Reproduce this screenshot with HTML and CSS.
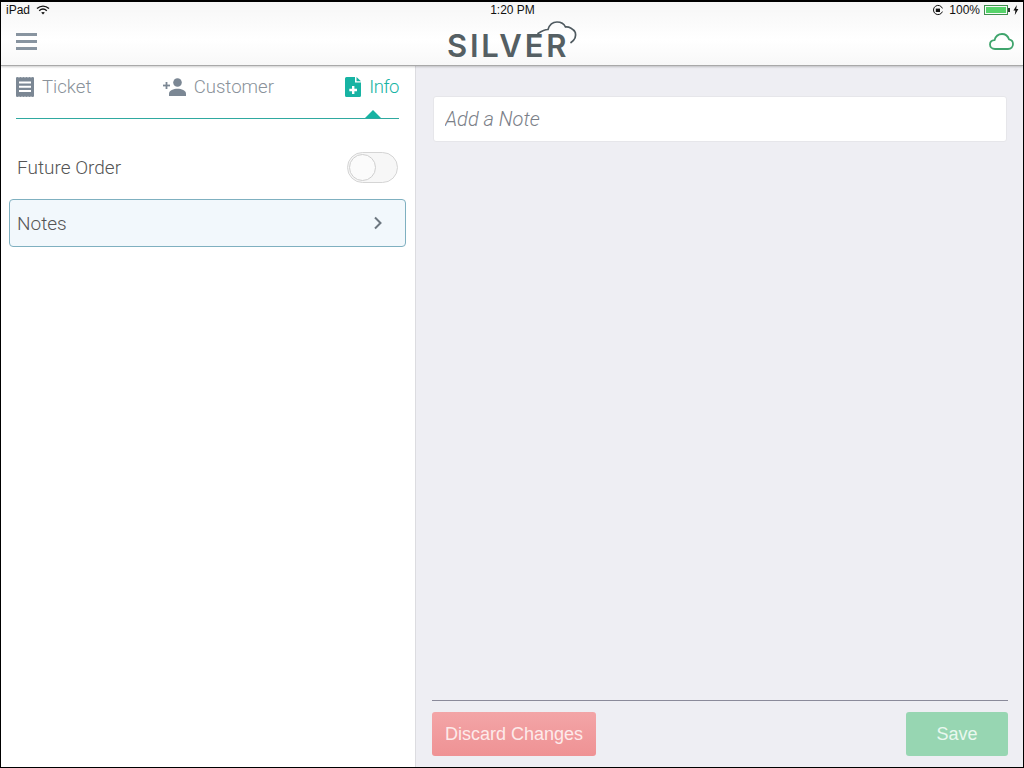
FILE: index.html
```html
<!DOCTYPE html>
<html lang="en">
<head>
    <meta charset="UTF-8">
    <title>Silver</title>
    <link rel="stylesheet" href="styles.css">
</head>
<body>
    <div class="frame">
        <header class="top">
            <div class="status-bar">
                <div class="status-left">
                    <span>iPad</span>
                    <svg class="wifi" width="14" height="10" viewBox="0 0 14 10">
                        <path d="M1 3.6C4.6.4 9.4.4 13 3.6" fill="none" stroke="#111" stroke-width="1.4"/>
                        <path d="M3.2 5.7c2.3-2 5.3-2 7.6 0" fill="none" stroke="#111" stroke-width="1.4"/>
                        <path d="M5.2 7.6c1-.9 2.6-.9 3.6 0L7 9.6z" fill="#111"/>
                    </svg>
                </div>
                <div class="status-time">1:20 PM</div>
                <div class="status-right">
                    <svg width="12" height="12" viewBox="0 0 12 12">
                        <path d="M10.4 7.6A4.6 4.6 0 1 1 10.4 4.4" fill="none" stroke="#111" stroke-width="1"/>
                        <rect x="3.8" y="4.6" width="4.2" height="3.4" fill="#111"/>
                    </svg>
                    <span class="battery-text">100%</span>
                    <div class="battery"><div class="battery-fill"></div></div>
                    <div class="battery-cap"></div>
                    <svg width="6" height="10" viewBox="0 0 6 10">
                        <path d="M3.8 0L.4 5.6h2L1.8 10l3.6-6H3.3z" fill="#111"/>
                    </svg>
                </div>
            </div>
            <div class="nav-bar">
                <button class="menu-button" aria-label="Menu">
                    <span></span><span></span><span></span>
                </button>
                <div class="logo">
                    <span class="logo-text">SILVER</span>
                    <svg class="logo-cloud" width="42" height="26" viewBox="0 0 42 26">
                        <path d="M2 13.500C5 11.500 9 9.500 12 9.500 13.500 4.500 17 2 21 2c4 0 7 1.800 8.500 5 3.500-.3 8 1.500 9.800 5.500 1 3.500-.8 7.500-4.300 10" fill="none" stroke="#4f5a60" stroke-width="1.700" stroke-linecap="round"/>
                    </svg>
                </div>
                <svg class="cloud-status" width="25" height="17" viewBox="0 0 25 17">
                    <path d="M6 16C3 16 1 14 1 11.500 1 9 3 7.300 5.500 7.200 6.500 3.500 9.500 1 13 1c3.500 0 6 2.300 7 5.300 2.300.4 4 2.400 4 4.700 0 2.800-2 5-5 5z" fill="none" stroke="#3fa46c" stroke-width="1.800"/>
                </svg>
            </div>
        </header>

        <div class="content">
            <aside class="sidebar">
                <nav class="tabs">
                    <div class="tab">
                        <svg width="18" height="20" viewBox="0 0 18 20">
                            <path d="M0 .5l1.500-.5 1.500.5 1.500-.5 1.500.5 1.500-.5 1.500.5 1.500-.5 1.500.5 1.500-.5 1.500.5 1.500-.5 1.500.5v19l-1.500.5-1.500-.5-1.500.5-1.500-.5-1.500.5-1.500-.5-1.500.5-1.500-.5-1.500.5-1.500-.5-1.500.5-1.500-.5z" fill="#7b8794"/>
                            <path d="M3 4.500h12v2H3zM3 8.700h12v2H3zM3 12.900h12v2H3z" fill="#fff"/>
                        </svg>
                        <span>Ticket</span>
                    </div>
                    <div class="tab tab-customer">
                        <svg width="24" height="18" viewBox="0 0 24 18">
                            <circle cx="14.500" cy="4.500" r="4.300" fill="#7b8794"/>
                            <path d="M6 18v-2.500c0-3 4.500-4.700 8.500-4.700s8.500 1.700 8.500 4.700V18z" fill="#7b8794"/>
                            <path d="M0 6.600h7v1.800H0z" fill="#7b8794"/>
                            <path d="M2.600 4h1.800v7H2.600z" fill="#7b8794"/>
                        </svg>
                        <span>Customer</span>
                    </div>
                    <div class="tab tab-active">
                        <svg width="16" height="20" viewBox="0 0 16 20">
                            <path d="M1.500 0H10v5.500h6v13a1.500 1.500 0 0 1-1.500 1.500h-13A1.500 1.500 0 0 1 0 18.500v-17A1.500 1.500 0 0 1 1.500 0zM11.500 0L16 4.200h-4.500z" fill="#17b3a3"/>
                            <path d="M7 9h2.400v2.800H12v2.400H9.400V17H7v-2.800H4.300v-2.400H7z" fill="#fff"/>
                        </svg>
                        <span>Info</span>
                        <div class="tab-arrow"></div>
                    </div>
                </nav>
                <div class="row-toggle">
                    <span>Future Order</span>
                    <div class="switch"><div class="switch-knob"></div></div>
                </div>
                <div class="row-notes">
                    <span>Notes</span>
                    <svg width="10" height="14" viewBox="0 0 10 14">
                        <path d="M2 1.500L7.500 7 2 12.500" fill="none" stroke="#6d7780" stroke-width="2"/>
                    </svg>
                </div>
            </aside>

            <main class="detail">
                <input class="note-input" type="text" placeholder="Add a Note">
                <div class="actions">
                    <button class="btn btn-discard">Discard Changes</button>
                    <button class="btn btn-save">Save</button>
                </div>
            </main>
        </div>
    </div>
</body>
</html>
```

FILE: styles.css
```css
* {
    box-sizing: border-box;
}
html, body {
    margin: 0;
    padding: 0;
}
body {
    font-family: Roboto, "Liberation Sans", sans-serif;
    background-color: #ffffff;
}
.frame {
    width: 1024px;
    height: 768px;
    border: 1px solid #000000;
    border-top-width: 2px;
    display: flex;
    flex-direction: column;
    overflow: hidden;
}
.top {
    height: 64px;
    background: linear-gradient(#f6f6f6, #ffffff 60%, #f8f8f8);
    border-bottom: 1px solid #a9a9a9;
    box-shadow: 0 1px 2px rgba(0, 0, 0, 0.2);
    position: relative;
    flex-shrink: 0;
}
.status-bar {
    height: 18px;
    display: grid;
    grid-template-columns: 1fr auto 1fr;
    align-items: center;
    padding: 0 4px 2px 5px;
    font-family: "Liberation Sans", sans-serif;
    font-size: 12px;
    color: #111111;
}
.status-left {
    display: flex;
    align-items: center;
    gap: 6px;
}
.status-right {
    display: flex;
    align-items: center;
    justify-content: flex-end;
}
.battery-text {
    margin: 0 4px 0 5px;
}
.battery {
    width: 24px;
    height: 10px;
    border: 1px solid #3f8f4f;
    padding: 1px;
}
.battery-fill {
    height: 100%;
    background-color: #56d36a;
}
.battery-cap {
    width: 2px;
    height: 4px;
    background-color: #333333;
    margin-right: 3px;
}
.nav-bar {
    height: 45px;
    display: flex;
    align-items: center;
    justify-content: space-between;
    padding: 0 9px 0 15px;
    position: relative;
}
.menu-button {
    width: 21px;
    padding: 0;
    border: none;
    background: none;
    display: flex;
    flex-direction: column;
    gap: 4px;
    margin-bottom: 3px;
}
.menu-button span {
    display: block;
    height: 3px;
    background-color: #8894a0;
}
.logo {
    position: absolute;
    left: 446px;
    top: 2px;
    width: 132px;
    height: 40px;
}
.logo-text {
    position: absolute;
    left: 0;
    top: 7px;
    font-family: Inter, sans-serif;
    font-weight: 600;
    font-size: 31px;
    line-height: 34px;
    letter-spacing: 2.800px;
    color: #555f63;
}
.logo-cloud {
    position: absolute;
    left: 89px;
    top: -2px;
}
.cloud-status {
    margin-bottom: 2px;
}
.content {
    flex: 1;
    display: flex;
    min-height: 0;
}
.sidebar {
    width: 415px;
    flex-shrink: 0;
    background-color: #ffffff;
    border-right: 1px solid #dcdce0;
    padding: 0 8px;
}
.tabs {
    height: 53px;
    margin: 0 8px 0 7px;
    display: flex;
    justify-content: space-between;
    border-bottom: 1px solid #2fa9a0;
    color: #8a929a;
    font-weight: 300;
    font-size: 18.600px;
}
.tab {
    display: flex;
    align-items: center;
    gap: 8px;
    height: 42px;
    position: relative;
}
.tab-customer {
    gap: 7px;
}
.tab-active {
    color: #17b3a3;
    letter-spacing: -0.500px;
}
.tab-arrow {
    position: absolute;
    right: 18px;
    top: 44px;
    width: 0;
    height: 0;
    border-left: 8px solid transparent;
    border-right: 8px solid transparent;
    border-bottom: 8px solid #17b3a3;
}
.row-toggle {
    height: 80px;
    display: flex;
    align-items: center;
    justify-content: space-between;
    padding: 16px 9px 0 8px;
    font-weight: 300;
    font-size: 19px;
    color: #555555;
}
.switch {
    width: 51px;
    height: 31px;
    border: 1px solid #d5d5d5;
    border-radius: 16px;
    background-color: #f7f7f7;
    padding: 1px;
}
.switch-knob {
    width: 27px;
    height: 27px;
    border-radius: 50%;
    background-color: #fbfbfb;
    border: 1px solid #cfcfcf;
}
.row-notes {
    width: 397px;
    height: 48px;
    display: flex;
    align-items: center;
    justify-content: space-between;
    padding: 0 22px 0 7px;
    background-color: #f2f8fc;
    border: 1px solid #7fb0c0;
    border-radius: 4px;
    font-weight: 300;
    font-size: 19px;
    color: #555555;
}
.detail {
    flex: 1;
    background-color: #eeeef3;
    padding: 30px 16px 11px 17px;
    display: flex;
    flex-direction: column;
    justify-content: space-between;
}
.note-input {
    width: 574px;
    height: 46px;
    padding: 0 11px;
    border: 1px solid #e6e6ea;
    border-radius: 3px;
    background-color: #ffffff;
    font-family: Roboto, "Liberation Sans", sans-serif;
    font-style: italic;
    font-weight: 300;
    font-size: 20px;
    outline: none;
}
.note-input::placeholder {
    color: #7b8088;
    opacity: 1;
}
.actions {
    margin-left: -1px;
    margin-right: -1px;
    border-top: 1px solid #8a8a9a;
    padding-top: 11px;
    display: flex;
    justify-content: space-between;
}
.btn {
    height: 44px;
    border: none;
    border-radius: 3px;
    color: #ffffff;
    font-family: "Liberation Sans", sans-serif;
    font-size: 18px;
    padding: 0;
}
.btn-discard {
    width: 164px;
    background: linear-gradient(#f3a5a7, #ef9294);
    color: #fdeaea;
}
.btn-save {
    width: 102px;
    background-color: #97d6b2;
    color: #e9f8ef;
}
```
